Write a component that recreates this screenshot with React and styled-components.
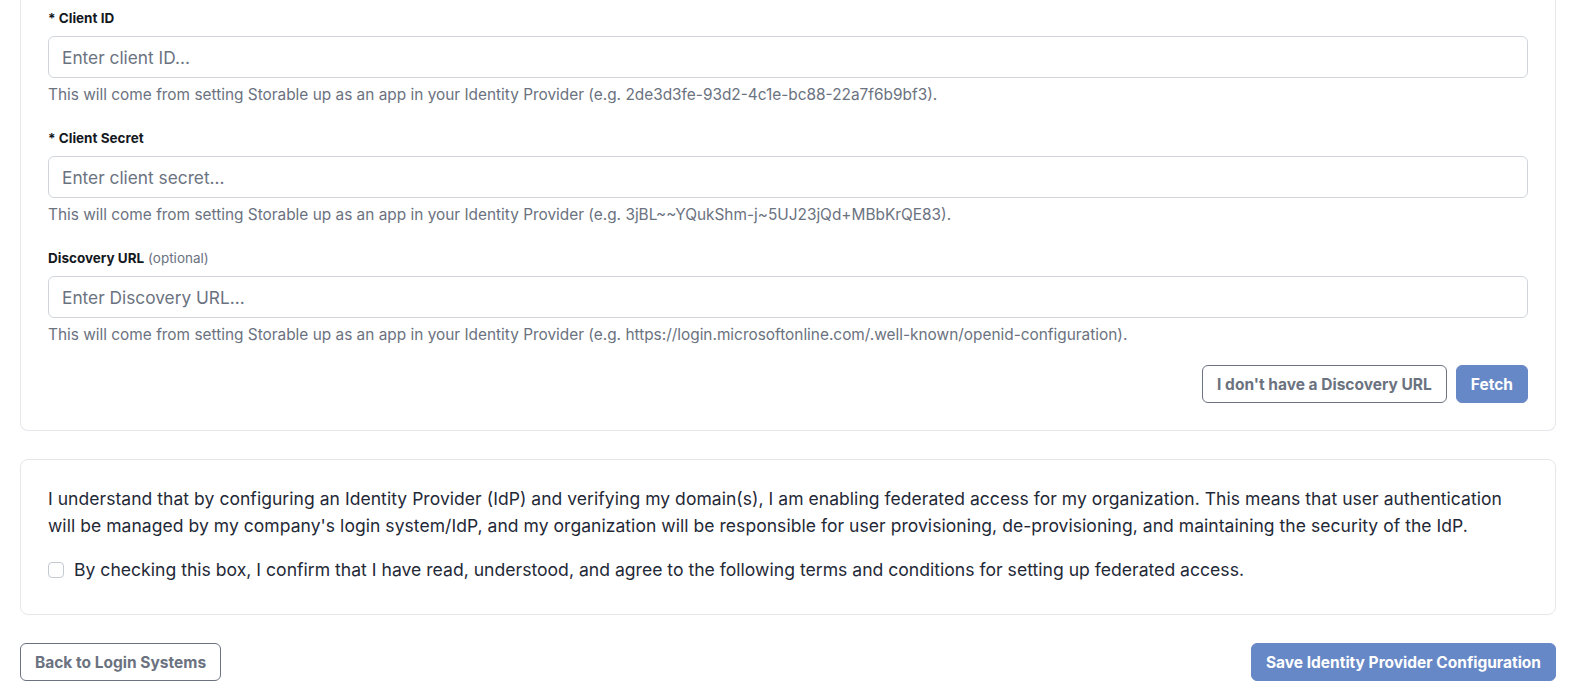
import React from "react";
import styled, { createGlobalStyle } from "styled-components";

const GlobalStyle = createGlobalStyle`
  * { box-sizing: border-box; }
  body {
    margin: 0;
    background: #ffffff;
    font-family: Inter, "Noto Sans", sans-serif;
    color: #1f2937;
  }
`;

const Page = styled.div`
  padding: 0 20px 22px 20px;
  display: flex;
  flex-direction: column;
  gap: 28px;
`;

const Card = styled.section`
  border: 1px solid #e5e7eb;
  border-radius: 8px;
  background: #fff;
  padding: ${(p) => p.$padding || "24px 27px 28px"};
  ${(p) => p.$open && "border-top: none; border-radius: 0 0 8px 8px;"}
`;

const Field = styled.div`
  display: flex;
  flex-direction: column;
  margin-bottom: ${(p) => (p.$last ? "20px" : "23px")};
`;

const Label = styled.label`
  font-size: 13.5px;
  line-height: 20px;
  font-weight: 700;
  color: #141821;
  margin-bottom: 8px;

  span {
    font-weight: 400;
    color: #6b7280;
  }
`;

const Input = styled.input`
  height: 42px;
  border: 1px solid #d1d5db;
  border-radius: 6px;
  padding: 0 13px;
  font-family: inherit;
  font-size: 17.3px;
  color: #111827;
  outline: none;

  &::placeholder {
    color: #6b7280;
  }
`;

const Help = styled.p`
  margin: 7px 0 0;
  font-size: 15.4px;
  line-height: 20px;
  color: #6b7280;
`;

const Actions = styled.div`
  display: flex;
  justify-content: ${(p) => p.$justify || "flex-end"};
  gap: 9px;
`;

const Button = styled.button`
  height: 38px;
  padding: 0 14px;
  border-radius: 6px;
  font-family: inherit;
  font-size: 15.5px;
  font-weight: 700;
  cursor: pointer;
  border: 1px solid ${(p) => (p.$primary ? "#6788c6" : "#6b7280")};
  background: ${(p) => (p.$primary ? "#6788c6" : "#fff")};
  color: ${(p) => (p.$primary ? "#fff" : "#6b7280")};
`;

const Paragraph = styled.p`
  margin: 0 0 19px;
  font-size: 17.5px;
  letter-spacing: 0.05px;
  line-height: 27px;
  color: #1f2937;
`;

const CheckRow = styled.label`
  display: flex;
  align-items: center;
  gap: 10px;
  font-size: 17.6px;
  line-height: 24px;
  color: #1f2937;
`;

const Box = styled.input`
  appearance: none;
  flex: none;
  width: 16px;
  height: 16px;
  margin: 0;
  border: 1px solid #c4c9d2;
  border-radius: 4px;
  background: #fff;
`;

const fields = [
  {
    name: "Client ID",
    required: true,
    placeholder: "Enter client ID...",
    example: "2de3d3fe-93d2-4c1e-bc88-22a7f6b9bf3",
  },
  {
    name: "Client Secret",
    required: true,
    placeholder: "Enter client secret...",
    example: "3jBL~~YQukShm-j~5UJ23jQd+MBbKrQE83",
  },
  {
    name: "Discovery URL",
    required: false,
    placeholder: "Enter Discovery URL...",
    example: "https://login.microsoftonline.com/.well-known/openid-configuration",
  },
];

export default function App() {
  return (
    <>
      <GlobalStyle />
      <Page>
        <Card $open $padding="8px 27px 27px">
          {fields.map((f, i) => (
            <Field key={f.name} $last={i === fields.length - 1}>
              <Label>
                {f.required ? `* ${f.name}` : f.name}
                {!f.required && <span> (optional)</span>}
              </Label>
              <Input placeholder={f.placeholder} />
              <Help>
                This will come from setting Storable up as an app in your Identity Provider (e.g. {f.example}).
              </Help>
            </Field>
          ))}
          <Actions>
            <Button>I don't have a Discovery URL</Button>
            <Button $primary>Fetch</Button>
          </Actions>
        </Card>

        <Card $padding="25px 27px 32px">
          <Paragraph>
            I understand that by configuring an Identity Provider (IdP) and verifying my domain(s), I am enabling
            federated access for my organization. This means that user authentication will be managed by my
            company's login system/IdP, and my organization will be responsible for user provisioning,
            de-provisioning, and maintaining the security of the IdP.
          </Paragraph>
          <CheckRow>
            <Box type="checkbox" />
            By checking this box, I confirm that I have read, understood, and agree to the following terms and
            conditions for setting up federated access.
          </CheckRow>
        </Card>

        <Actions $justify="space-between">
          <Button>Back to Login Systems</Button>
          <Button $primary>Save Identity Provider Configuration</Button>
        </Actions>
      </Page>
    </>
  );
}
